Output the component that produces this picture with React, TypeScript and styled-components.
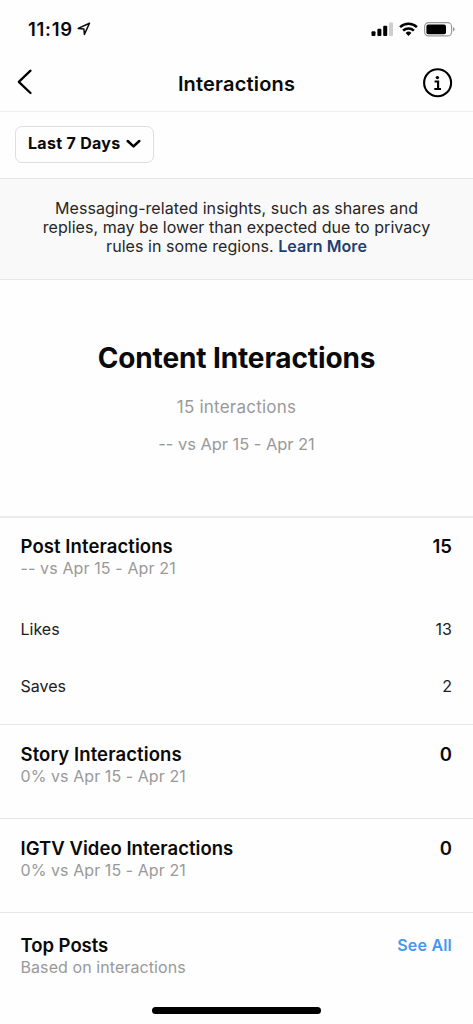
import React from "react";
import styled, { createGlobalStyle } from "styled-components";

const GlobalStyle = createGlobalStyle`
  * { box-sizing: border-box; }
  body {
    margin: 0;
    background: #fefefe;
    color: #0a0a0a;
    font-family: Inter, "Liberation Sans", sans-serif;
  }
  h1, h2, h3, p { margin: 0; }
  button { font-family: inherit; color: inherit; border: 0; padding: 0; background: none; }
`;

const Screen = styled.main`
  width: 473px;
  height: 1024px;
  display: flex;
  flex-direction: column;
  overflow: hidden;
`;

const StatusBar = styled.div`
  height: 56px;
  padding: 2px 17px 0 28px;
  display: flex;
  align-items: center;
  justify-content: space-between;
`;

const Clock = styled.div`
  display: flex;
  align-items: center;
  gap: 4px;
  font-size: 18.5px;
  font-weight: 600;
  letter-spacing: 0.7px;
`;

const StatusIcons = styled.div`
  display: flex;
  align-items: center;
  gap: 5px;
`;

const NavBar = styled.header`
  height: 56px;
  padding: 0 19px 0 16px;
  display: grid;
  grid-template-columns: 40px 1fr 37px;
  align-items: center;
  border-bottom: 1px solid #efefef;
`;

const NavTitle = styled.h1`
  font-size: 20px;
  line-height: 24px;
  font-weight: 600;
  text-align: center;
  letter-spacing: 0.18px;
`;

const IconButton = styled.button<{ $end?: boolean }>`
  display: flex;
  justify-content: ${(p) => (p.$end ? "flex-end" : "flex-start")};
  padding-bottom: ${(p) => (p.$end ? 2 : 4)}px;
`;

const FilterBar = styled.div`
  height: 67px;
  padding: 14px 15px 0;
  border-bottom: 1px solid #e6e6e6;
`;

const RangeButton = styled.button`
  width: 139px;
  height: 37px;
  padding: 0 12px 3px;
  display: flex;
  align-items: center;
  justify-content: space-between;
  border: 1px solid #dedede;
  border-radius: 7px;
  font-size: 16px;
  line-height: 18px;
  font-weight: 700;
  letter-spacing: 0.3px;
  white-space: nowrap;
`;

const Notice = styled.p`
  height: 101px;
  padding-top: 20px;
  background: #f9f9f9;
  border-bottom: 1px solid #e6e6e6;
  color: #262626;
  font-size: 16px;
  line-height: 19px;
  text-align: center;
`;

const NoticeLine = styled.span<{ $tracking: number }>`
  display: block;
  letter-spacing: ${(p) => p.$tracking}px;
`;

const LearnMore = styled.span`
  color: #1d3f73;
  font-weight: 600;
`;

const Summary = styled.section`
  height: 238px;
  padding-top: 60px;
  display: flex;
  flex-direction: column;
  align-items: center;
  border-bottom: 2px solid #ececec;
`;

const SummaryTitle = styled.h2`
  font-size: 28px;
  line-height: 36px;
  font-weight: 700;
  letter-spacing: -0.12px;
`;

const SummaryText = styled.p<{ $size: number; $gap: number; $tracking: number }>`
  margin-top: ${(p) => p.$gap}px;
  color: #999;
  font-size: ${(p) => p.$size}px;
  line-height: 22px;
  letter-spacing: ${(p) => p.$tracking}px;
`;

const Section = styled.section<{ $height: number; $top?: number }>`
  height: ${(p) => p.$height}px;
  padding: ${(p) => p.$top ?? 17}px 21px 0 20.5px;
  border-bottom: 1px solid #e6e6e6;
  &:last-of-type { border-bottom: 0; }
`;

const Row = styled.div`
  display: flex;
  justify-content: space-between;
  line-height: 24px;
`;

const SectionTitle = styled.h3<{ $tracking: number }>`
  font-size: 18.5px;
  font-weight: 600;
  letter-spacing: ${(p) => p.$tracking}px;
`;

const Total = styled.span`
  font-size: 18.5px;
  font-weight: 600;
`;

const Caption = styled.p<{ $tracking: number }>`
  color: #999;
  font-size: 16px;
  line-height: 20px;
  letter-spacing: ${(p) => p.$tracking}px;
`;

const MetricRow = styled.div<{ $gap: number }>`
  margin-top: ${(p) => p.$gap}px;
  display: flex;
  justify-content: space-between;
  color: #202020;
  font-size: 16px;
  line-height: 20px;
`;

const SeeAll = styled.button`
  color: #4598f0;
  font-size: 16px;
  font-weight: 600;
  line-height: 24px;
  letter-spacing: 0.2px;
`;

const HomeIndicator = styled.div`
  width: 169px;
  height: 7px;
  margin: auto auto 10px;
  border-radius: 4px;
  background: #000;
`;

const LocationIcon = () => (
  <svg width="14" height="14" viewBox="0 0 14 14" fill="none" stroke="#0a0a0a" strokeWidth="1.5" strokeLinejoin="round">
    <path d="M12.5 1.2 L1.2 6.4 L6.9 7 L7.4 12.4 Z" />
  </svg>
);

const SignalIcon = () => (
  <svg width="23" height="15" viewBox="0 0 23 15">
    <rect x="0.5" y="9.2" width="4" height="4.7" rx="1" />
    <rect x="6.4" y="6.8" width="4" height="7.1" rx="1" />
    <rect x="12.2" y="3.8" width="4" height="10.1" rx="1" />
    <rect x="18" y="0.4" width="4" height="13.5" rx="1" fill="#cecece" />
  </svg>
);

const WifiIcon = () => (
  <svg width="20" height="15" viewBox="0 0 20 15" fill="none" stroke="#000" strokeWidth="2.6">
    <path d="M1.1 5.1 A12.3 12.3 0 0 1 17.9 5.1" />
    <path d="M4.1 8.6 A7.9 7.9 0 0 1 14.9 8.6" />
    <path d="M6.6 11 A4.2 4.2 0 0 1 12.4 11 L9.5 14 Z" fill="#000" stroke="none" />
  </svg>
);

const BatteryIcon = () => (
  <svg width="32" height="15" viewBox="0 0 32 15">
    <rect x="0.6" y="0.7" width="27" height="13.2" rx="4" fill="none" stroke="#9b9b9b" strokeWidth="1.2" />
    <rect x="2.4" y="2.4" width="19.6" height="9.8" rx="2" />
    <path d="M29 5 Q30.7 5.8 30.7 7.3 Q30.7 8.8 29 9.6 Z" fill="#9b9b9b" />
  </svg>
);

const BackIcon = () => (
  <svg width="18" height="28" viewBox="0 0 18 28" fill="none" stroke="#000" strokeWidth="2.3" strokeLinecap="round" strokeLinejoin="round">
    <path d="M14.5 2.7 L2.8 13.8 L14.5 25" />
  </svg>
);

const InfoIcon = () => (
  <svg width="32" height="32" viewBox="0 0 32 32" fill="none" stroke="#000" strokeWidth="2.1">
    <circle cx="15.6" cy="15.8" r="13.5" />
    <circle cx="15.4" cy="10.6" r="1.7" fill="#000" stroke="none" />
    <path d="M12.6 14.5 H16.1 V22 M12.3 22 H19" />
  </svg>
);

const ChevronDown = () => (
  <svg width="15" height="10" viewBox="0 0 15 10" fill="none" stroke="#000" strokeWidth="2.5" strokeLinecap="round" strokeLinejoin="round">
    <path d="M1.7 3 L7.5 8.4 L13.3 3" />
  </svg>
);

export default function App() {
  return (
    <>
      <GlobalStyle />
      <Screen>
        <StatusBar>
          <Clock>11:19<LocationIcon /></Clock>
          <StatusIcons>
            <SignalIcon />
            <WifiIcon />
            <BatteryIcon />
          </StatusIcons>
        </StatusBar>
        <NavBar>
          <IconButton aria-label="Back"><BackIcon /></IconButton>
          <NavTitle>Interactions</NavTitle>
          <IconButton $end aria-label="Info"><InfoIcon /></IconButton>
        </NavBar>
        <FilterBar>
          <RangeButton>Last 7 Days<ChevronDown /></RangeButton>
        </FilterBar>
        <Notice>
          <NoticeLine $tracking={0.06}>Messaging-related insights, such as shares and</NoticeLine>
          <NoticeLine $tracking={0.04}>replies, may be lower than expected due to privacy</NoticeLine>
          <NoticeLine $tracking={0.06}>rules in some regions. <LearnMore>Learn More</LearnMore></NoticeLine>
        </Notice>
        <Summary>
          <SummaryTitle>Content Interactions</SummaryTitle>
          <SummaryText $size={17} $gap={20} $tracking={0.22}>15 interactions</SummaryText>
          <SummaryText $size={16.5} $gap={15} $tracking={-0.05}>-- vs Apr 15 - Apr 21</SummaryText>
        </Summary>
        <Section $height={207} $top={16}>
          <Row><SectionTitle $tracking={0.09}>Post Interactions</SectionTitle><Total>15</Total></Row>
          <Caption $tracking={0.12}>-- vs Apr 15 - Apr 21</Caption>
          <MetricRow $gap={41}><span>Likes</span><span>13</span></MetricRow>
          <MetricRow $gap={37}><span>Saves</span><span>2</span></MetricRow>
        </Section>
        <Section $height={94}>
          <Row><SectionTitle $tracking={0.11}>Story Interactions</SectionTitle><Total>0</Total></Row>
          <Caption $tracking={0.07}>0% vs Apr 15 - Apr 21</Caption>
        </Section>
        <Section $height={94}>
          <Row><SectionTitle $tracking={0.04}>IGTV Video Interactions</SectionTitle><Total>0</Total></Row>
          <Caption $tracking={0.07}>0% vs Apr 15 - Apr 21</Caption>
        </Section>
        <Section $height={80} $top={20}>
          <Row><SectionTitle $tracking={-0.03}>Top Posts</SectionTitle><SeeAll>See All</SeeAll></Row>
          <Caption $tracking={0.08}>Based on interactions</Caption>
        </Section>
        <HomeIndicator />
      </Screen>
    </>
  );
}
